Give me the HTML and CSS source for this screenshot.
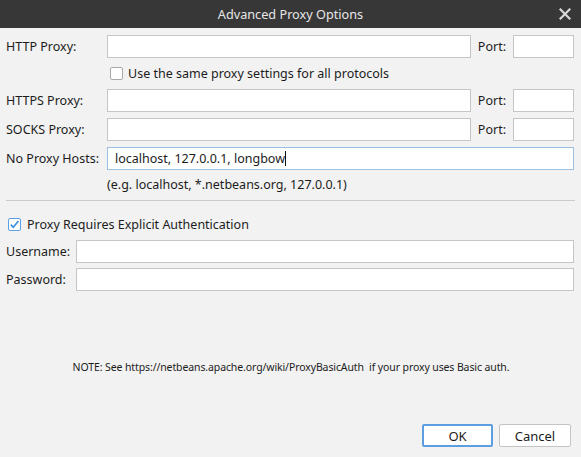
FILE: index.html
```html
<!DOCTYPE html>
<html>
<head>
<meta charset="utf-8">
<link rel="stylesheet" href="styles.css">
</head>
<body>
<div class="dialog">
  <div class="titlebar">
    <span class="title">Advanced Proxy Options</span>
    <svg class="close" width="12" height="12" viewBox="0 0 12 12"><path d="M1.5 1.5 L10.5 10.5 M10.5 1.5 L1.5 10.5" stroke="#d8d8d8" stroke-width="2.2" stroke-linecap="square"/></svg>
  </div>

  <div class="proxy-grid">
    <label class="lbl">HTTP Proxy:</label>
    <input class="field" type="text">
    <label class="lbl port">Port:</label>
    <input class="field" type="text">

    <div class="check-row span3">
      <span class="box"></span>
      <span>Use the same proxy settings for all protocols</span>
    </div>

    <label class="lbl">HTTPS Proxy:</label>
    <input class="field" type="text">
    <label class="lbl port">Port:</label>
    <input class="field" type="text">

    <label class="lbl">SOCKS Proxy:</label>
    <input class="field" type="text">
    <label class="lbl port">Port:</label>
    <input class="field" type="text">

    <label class="lbl">No Proxy Hosts:</label>
    <div class="field focused span3">localhost, 127.0.0.1, longbow<span class="caret"></span></div>

    <div class="hint span3">(e.g. localhost, *.netbeans.org, 127.0.0.1)</div>
  </div>

  <div class="separator"></div>

  <div class="check-row auth-check">
    <span class="box checked"><svg width="11" height="11" viewBox="0 0 11 11"><path d="M1.8 5.6 L4.3 8.2 L9.4 2" fill="none" stroke="#3d8ee0" stroke-width="1.6"/></svg></span>
    <span>Proxy Requires Explicit Authentication</span>
  </div>

  <div class="auth-grid">
    <label class="lbl">Username:</label>
    <input class="field" type="text">
    <label class="lbl">Password:</label>
    <input class="field" type="password">
  </div>

  <p class="note">NOTE: See https://netbeans.apache.org/wiki/ProxyBasicAuth&nbsp; if your proxy uses Basic auth.</p>

  <div class="buttons">
    <button class="btn default">OK</button>
    <button class="btn">Cancel</button>
  </div>
</div>
</body>
</html>
```
FILE: styles.css
```css
* { box-sizing: border-box; }
html, body {
  margin: 0;
  padding: 0;
  background: #f2f2f2;
}
body {
  font-family: "Noto Sans", "DejaVu Sans", sans-serif;
  font-size: 12.5px;
  color: #1c1c1c;
}
.dialog {
  width: 581px;
  height: 457px;
  overflow: hidden;
}
.titlebar {
  height: 28px;
  background: #373737;
  color: #e6e6e6;
  display: flex;
  align-items: center;
  justify-content: center;
  position: relative;
}
.title {
  font-size: 12.7px;
}
.close {
  position: absolute;
  right: 10px;
  top: 8px;
}
.proxy-grid {
  display: grid;
  grid-template-columns: 94px 1fr auto 61px;
  column-gap: 7px;
  row-gap: 6px;
  padding: 7px 7px 0 6px;
  align-items: center;
}
.span3 { grid-column: 2 / span 3; }
.lbl {
  white-space: nowrap;
  line-height: 16px;
}
.field {
  height: 23px;
  border: 1px solid #c6c6c6;
  background: #fff;
  margin: 0;
  padding: 0 6px;
  font: inherit;
  outline: none;
  width: 100%;
}
.field.focused {
  border-color: #9dbfe4;
  display: flex;
  align-items: center;
  padding-left: 7px;
}
.caret {
  display: inline-block;
  width: 1px;
  height: 15px;
  background: #111;
  margin-left: 0;
}
.check-row {
  display: flex;
  align-items: center;
  height: 19px;
  gap: 5px;
}
.proxy-grid .check-row { padding-left: 3px; }
.box {
  width: 13px;
  height: 13px;
  border: 1px solid #a9a9a9;
  border-radius: 2px;
  background: #fff;
  display: flex;
  align-items: center;
  justify-content: center;
  flex: none;
}
.box.checked { border-color: #5e9fe2; }
.hint {
  height: 18px;
  line-height: 18px;
}
.separator {
  height: 1px;
  background: #cbcbcb;
  margin: 6px 6px 0 6px;
}
.auth-check {
  margin-top: 14px;
  padding-left: 8px;
  gap: 6px;
}
.auth-grid {
  display: grid;
  grid-template-columns: 63px 1fr;
  column-gap: 7px;
  row-gap: 5px;
  padding: 6px 7px 0 6px;
  align-items: center;
}
.note {
  margin: 68px 0 0 0;
  text-align: center;
  font-size: 10.5px;
  line-height: 16px;
  letter-spacing: -0.11px;
  padding-left: 1px;
}
.buttons {
  display: flex;
  justify-content: flex-end;
  gap: 6px;
  padding-right: 10px;
  margin-top: 49px;
}
.btn {
  height: 23px;
  background: #fff;
  border: 1px solid #c4c4c4;
  border-radius: 2px;
  font: inherit;
  font-size: 13px;
  color: #1c1c1c;
  padding: 0;
  width: 72px;
}
.btn.default {
  border: 2px solid #5c9ee0;
  width: 71px;
}
```
